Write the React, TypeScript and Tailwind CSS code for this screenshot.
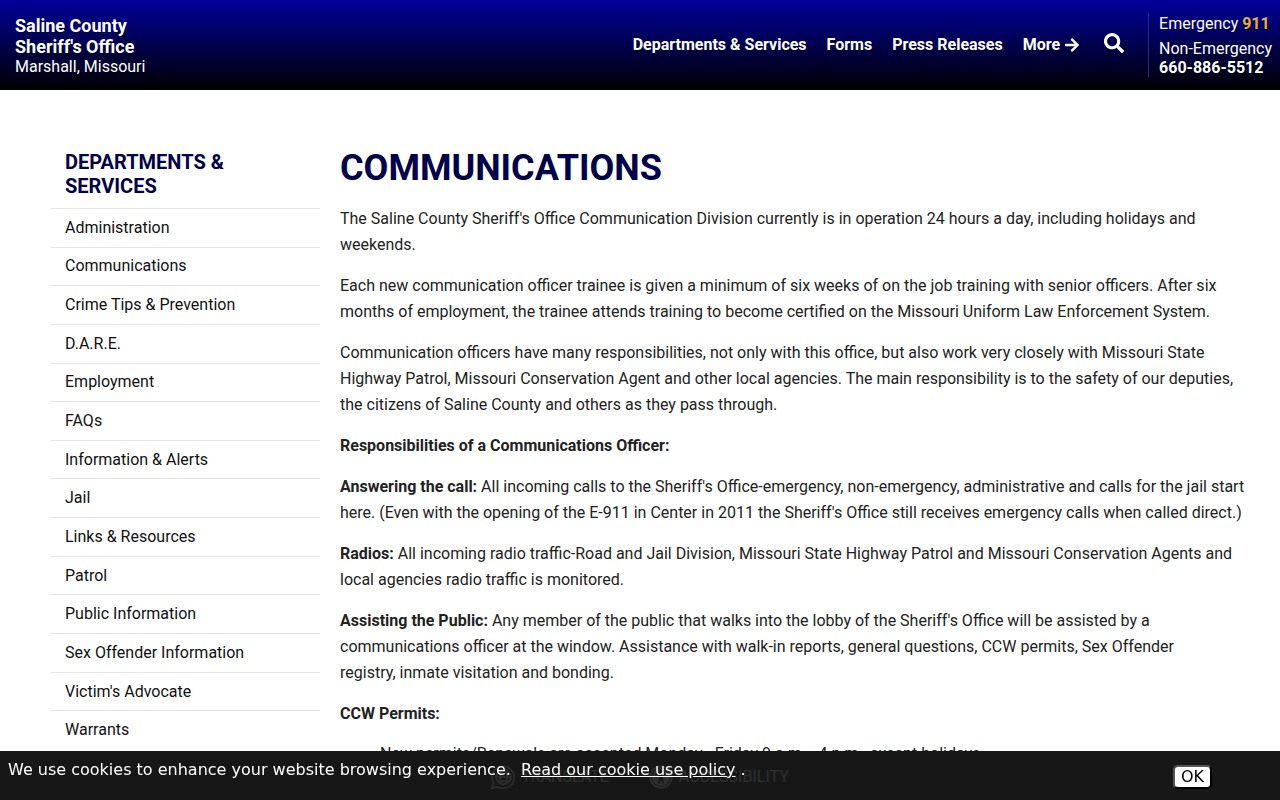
import { FaArrowRight, FaSearch, FaUniversalAccess } from "react-icons/fa";

const departments = [
  "Administration",
  "Communications",
  "Crime Tips & Prevention",
  "D.A.R.E.",
  "Employment",
  "FAQs",
  "Information & Alerts",
  "Jail",
  "Links & Resources",
  "Patrol",
  "Public Information",
  "Sex Offender Information",
  "Victim's Advocate",
  "Warrants",
];

function Header() {
  return (
    <header className="flex h-[90px] items-center justify-between bg-linear-to-b/srgb from-[#000099] to-black pl-[15px] pr-2 text-white">
      <a href="#" className="block">
        <span className="block text-lg leading-[21px] font-bold">
          Saline County
          <br />
          Sheriff's Office
        </span>
        <span className="block leading-[19px]">Marshall, Missouri</span>
      </a>

      <div className="flex items-center">
        <nav className="flex items-center gap-5 font-bold">
          <a href="#">Departments &amp; Services</a>
          <a href="#">Forms</a>
          <a href="#">Press Releases</a>
          <a href="#" className="flex items-center gap-1">
            More <FaArrowRight className="size-4" />
          </a>
        </nav>
        <button type="button" aria-label="Search" className="mx-6 pb-1">
          <FaSearch className="size-5" />
        </button>
        <div className="border-l border-[#2b2b80] pl-[10px] leading-[19px]">
          <p className="mb-[6px]">
            Emergency <strong className="text-[#eab025]">911</strong>
          </p>
          <p>
            Non-Emergency
            <br />
            <strong>660-886-5512</strong>
          </p>
        </div>
      </div>
    </header>
  );
}

function Sidebar() {
  return (
    <aside className="w-[270px] shrink-0">
      <h2 className="px-[15px] pb-[10px] text-xl leading-6 font-bold text-[#00004d]">
        DEPARTMENTS &amp; SERVICES
      </h2>
      <ul className="flex min-h-[541px] flex-col">
        {departments.map((name) => (
          <li key={name} className="flex flex-1 items-center border-t border-[#e6e6e6]">
            <a href="#" className="block w-full px-[15px] leading-6 text-[#111]">
              {name}
            </a>
          </li>
        ))}
      </ul>
    </aside>
  );
}

function Toolbar() {
  return (
    <div className="fixed inset-x-0 bottom-0 flex h-[49px] items-center justify-center gap-10 bg-[#171717] pt-[2px] text-white">
      <a href="#" className="flex items-center gap-[6px]">
        <svg viewBox="0 0 24 24" className="size-6" fill="none" stroke="currentColor" strokeWidth="1.5">
          <path d="M1 23l1.5-5.5A11 11 0 1 1 7 22z" />
          <circle cx="12.5" cy="12" r="7.5" />
          <ellipse cx="12.5" cy="12" rx="3.5" ry="7.5" />
          <path d="M5 12h15M6.5 8h12M6.5 16h12" />
        </svg>
        TRANSLATE
      </a>
      <a href="#" className="flex items-center gap-[6px]">
        <FaUniversalAccess className="size-6" />
        ACCESSIBILITY
      </a>
    </div>
  );
}

function CookieBar() {
  return (
    <div className="fixed inset-x-0 bottom-0 flex h-[49px] items-start justify-between bg-[#171717]/90 pt-[7px] pr-[68px] pl-2 font-['DejaVu_Sans',sans-serif] text-white">
      <p className="leading-6">
        We use cookies to enhance your website browsing experience.&nbsp;{" "}
        <a href="#" className="underline">
          Read our cookie use policy
        </a>{" "}
        .
      </p>
      <button
        type="button"
        className="mt-[7px] rounded-[5px] border-2 border-t-[#555] border-r-black border-b-black border-l-[#555] bg-white px-[6px] leading-5 text-black"
      >
        OK
      </button>
    </div>
  );
}

export default function App() {
  return (
    <div className="min-h-screen bg-white font-[Roboto,sans-serif] text-base text-[#222]">
      <Header />

      <div className="flex gap-5 pt-[60px] pr-8 pb-16 pl-[50px]">
        <Sidebar />

        <main className="min-w-0 flex-1 leading-[26px]">
          <h1 className="mb-5 text-4xl leading-9 font-bold text-[#00004d]">COMMUNICATIONS</h1>
          <div className="space-y-[15px]">
            <p>
              The Saline County Sheriff's Office Communication Division currently is in operation 24
              hours a day, including holidays and weekends.
            </p>
            <p>
              Each new communication officer trainee is given a minimum of six weeks of on the job
              training with senior officers. After six months of employment, the trainee attends
              training to become certified on the Missouri Uniform Law Enforcement System.
            </p>
            <p>
              Communication officers have many responsibilities, not only with this office, but also
              work very closely with Missouri State Highway Patrol, Missouri Conservation Agent and
              other local agencies. The main responsibility is to the safety of our deputies, the
              citizens of Saline County and others as they pass through.
            </p>
            <p>
              <strong>Responsibilities of a Communications Officer:</strong>
            </p>
            <p>
              <strong>Answering the call:</strong> All incoming calls to the Sheriff's
              Office-emergency, non-emergency, administrative and calls for the jail start here.
              (Even with the opening of the E-911 in Center in 2011 the Sheriff's Office still
              receives emergency calls when called direct.)
            </p>
            <p>
              <strong>Radios:</strong> All incoming radio traffic-Road and Jail Division, Missouri
              State Highway Patrol and Missouri Conservation Agents and local agencies radio traffic
              is monitored.
            </p>
            <p>
              <strong>Assisting the Public:</strong> Any member of the public that walks into the
              lobby of the Sheriff's Office will be assisted by a communications officer at the
              window. Assistance with walk-in reports, general questions, CCW permits, Sex Offender
              registry,&nbsp;inmate visitation and bonding.
            </p>
            <p>
              <strong>CCW Permits:</strong>
            </p>
            <ul className="pl-10 leading-6">
              <li>New permits/Renewals are accepted Monday - Friday 9 a.m. - 4 p.m., except holidays.</li>
            </ul>
          </div>
        </main>
      </div>

      <Toolbar />
      <CookieBar />
    </div>
  );
}
